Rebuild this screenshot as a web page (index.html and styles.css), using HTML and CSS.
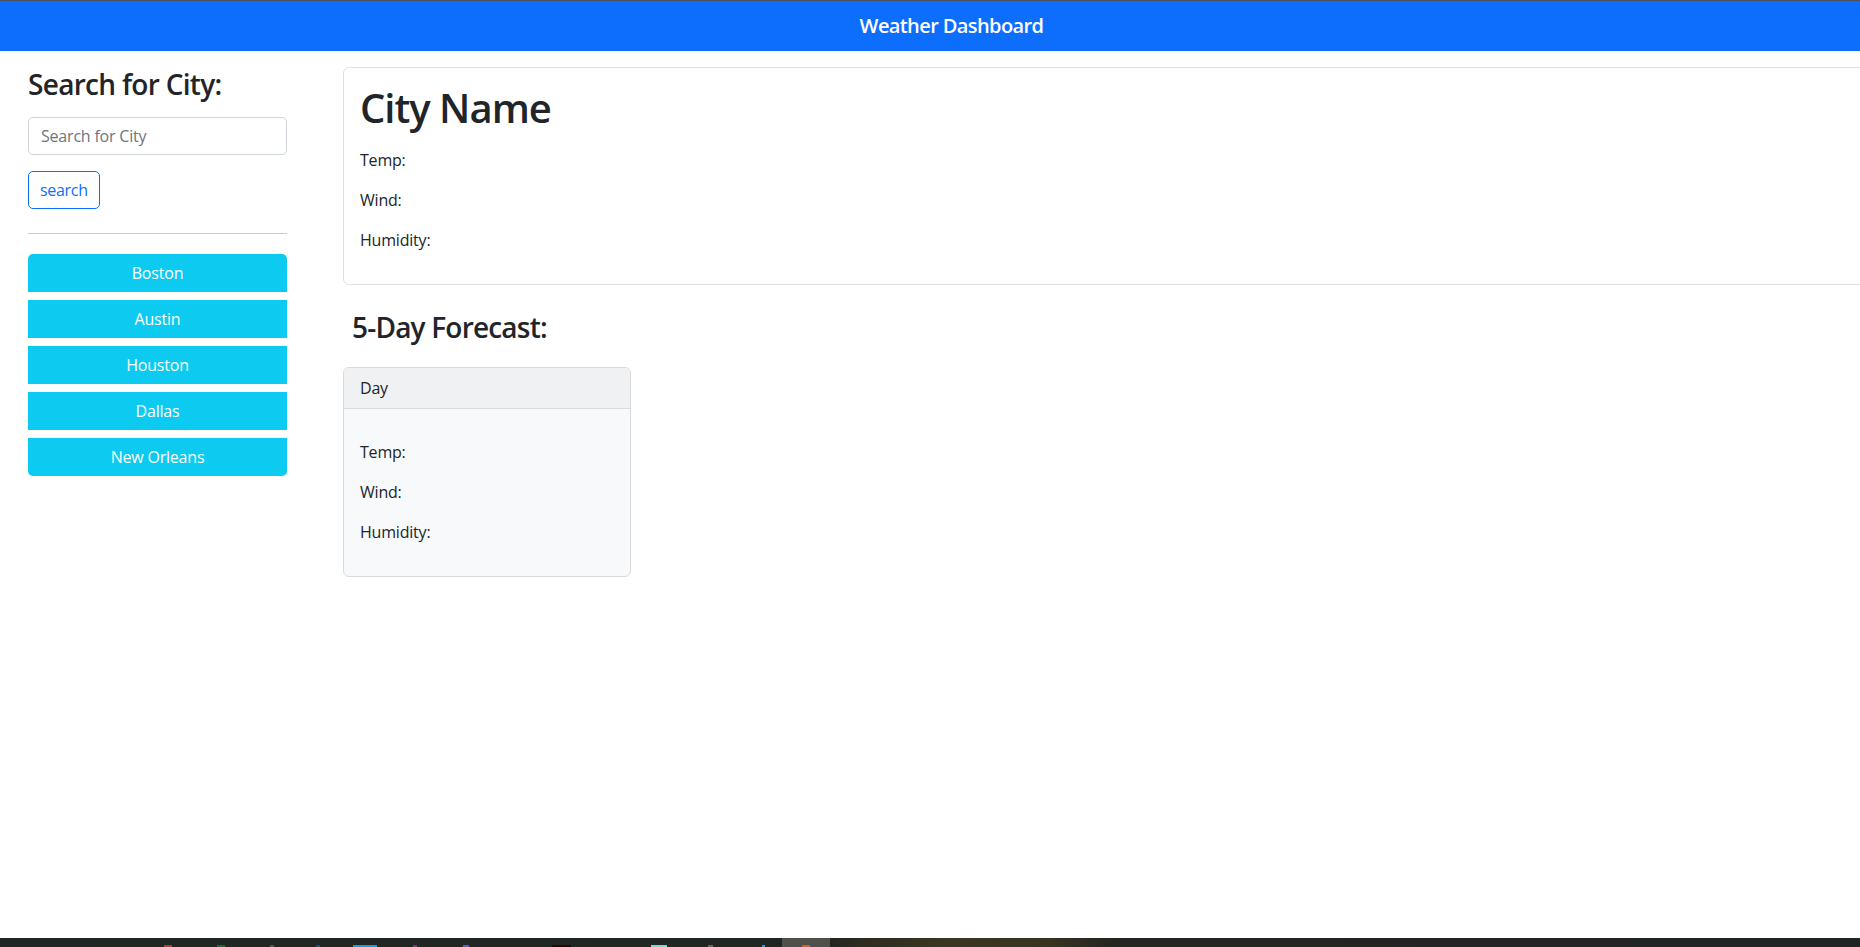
FILE: index.html
```html
<!DOCTYPE html>
<html lang="en">
<head>
<meta charset="utf-8">
<title>Weather Dashboard</title>
<link rel="stylesheet" href="styles.css">
</head>
<body>
<div class="page">
  <header class="navbar">
    <span class="brand">Weather Dashboard</span>
  </header>
  <div class="layout">
    <aside class="sidebar">
      <h3 class="side-title">Search for City:</h3>
      <input class="search-input" type="text" placeholder="Search for City">
      <button class="search-btn" type="button">search</button>
      <hr class="divider">
      <div class="history">
        <button class="city-btn" type="button">Boston</button>
        <button class="city-btn" type="button">Austin</button>
        <button class="city-btn" type="button">Houston</button>
        <button class="city-btn" type="button">Dallas</button>
        <button class="city-btn" type="button">New Orleans</button>
      </div>
    </aside>
    <main class="content">
      <section class="current-card">
        <h1 class="city-name">City Name</h1>
        <p class="stat">Temp:</p>
        <p class="stat">Wind:</p>
        <p class="stat">Humidity:</p>
      </section>
      <h3 class="forecast-title">5-Day Forecast:</h3>
      <div class="forecast-row">
        <div class="day-card">
          <div class="day-header">Day</div>
          <div class="day-body">
            <div class="day-icon"></div>
            <p class="stat">Temp:</p>
            <p class="stat">Wind:</p>
            <p class="stat">Humidity:</p>
          </div>
        </div>
      </div>
    </main>
  </div>
</div>
<div class="taskbar">
  <span class="tb-icon tb-red"></span>
  <span class="tb-icon tb-green"></span>
  <span class="tb-icon tb-gray"></span>
  <span class="tb-icon tb-navy"></span>
  <span class="tb-icon tb-cyan"></span>
  <span class="tb-icon tb-plum"></span>
  <span class="tb-icon tb-violet"></span>
  <span class="tb-icon tb-dark"></span>
  <span class="tb-icon tb-mint"></span>
  <span class="tb-icon tb-gray2"></span>
  <span class="tb-icon tb-blue"></span>
  <span class="tb-active"><span class="tb-icon tb-orange"></span></span>
</div>
</body>
</html>
```

FILE: styles.css
```css
html, body {
  margin: 0;
  padding: 0;
  height: 100%;
  overflow: hidden;
}

body {
  display: flex;
  flex-direction: column;
  font-family: "Open Sans", "Noto Sans", sans-serif;
  font-size: 16px;
  letter-spacing: -0.2px;
  color: #212529;
  background: #fff;
}

.page {
  width: 1903px;
  flex: 1;
}

.navbar {
  height: 50px;
  border-top: 1px solid #4b5056;
  background: #0d6efd;
  display: flex;
  justify-content: center;
  align-items: center;
}

.brand {
  color: #fff;
  font-size: 20px;
  font-weight: 600;
  letter-spacing: -0.6px;
  line-height: 50px;
}

.layout {
  display: flex;
  align-items: flex-start;
  padding: 16px 12px 0 28px;
}

.sidebar {
  width: 259px;
  flex-shrink: 0;
  display: flex;
  flex-direction: column;
  align-items: flex-start;
}

.side-title {
  margin: 0 0 16px;
  font-size: 28px;
  font-weight: 600;
  letter-spacing: -0.7px;
  line-height: 34px;
}

.search-input {
  box-sizing: border-box;
  width: 100%;
  height: 38px;
  margin: 0 0 16px;
  padding: 0 12px;
  border: 1px solid #ced4da;
  border-radius: 5px;
  font-family: inherit;
  font-size: 16px;
  letter-spacing: -0.2px;
  color: #212529;
  outline: none;
}

.search-input::placeholder {
  color: #6c757d;
}

.search-btn {
  box-sizing: border-box;
  height: 38px;
  padding: 0 11px;
  border: 1px solid #0d6efd;
  border-radius: 5px;
  background: #fff;
  color: #0d6efd;
  font-family: inherit;
  font-size: 16px;
  letter-spacing: -0.3px;
  line-height: 24px;
}

.divider {
  width: 100%;
  margin: 24px 0 20px;
  border: 0;
  border-top: 1px solid #c8c9ca;
}

.history {
  width: 100%;
  display: flex;
  flex-direction: column;
  gap: 8px;
}

.city-btn {
  box-sizing: border-box;
  height: 38px;
  width: 100%;
  border: 0;
  border-radius: 0;
  background: #0dcaf0;
  color: #fff;
  font-family: inherit;
  font-size: 16px;
  letter-spacing: -0.2px;
  line-height: 24px;
}

.city-btn:first-child {
  border-radius: 5px 5px 0 0;
}

.city-btn:last-child {
  border-radius: 0 0 5px 5px;
}

.content {
  flex: 1;
  margin-left: 56px;
}

.current-card {
  border: 1px solid #dfdfdf;
  border-radius: 6px;
  padding: 16px;
}

.city-name {
  margin: 0 0 16px;
  font-size: 40px;
  font-weight: 600;
  letter-spacing: -1px;
  line-height: 48px;
}

.stat {
  margin: 0 0 16px;
  font-size: 16px;
  line-height: 24px;
}

.forecast-title {
  margin: 25px 0 23px 9px;
  font-size: 28px;
  font-weight: 600;
  letter-spacing: -0.8px;
  line-height: 34px;
}

.forecast-row {
  display: flex;
  gap: 16px;
}

.day-card {
  width: 288px;
  box-sizing: border-box;
  border: 1px solid #d9dadb;
  border-radius: 6px;
  background: #f8f9fa;
  overflow: hidden;
}

.day-header {
  padding: 8px 16px;
  line-height: 24px;
  background: #f0f1f2;
  border-bottom: 1px solid #d9dadb;
}

.day-body {
  padding: 16px;
}

.day-icon {
  height: 15px;
}

.taskbar {
  height: 9px;
  flex-shrink: 0;
  display: flex;
  align-items: flex-end;
  background: linear-gradient(90deg, #212624 0, #222623 833px, #2c2c1f 860px, #3a3621 950px, #36331f 1050px, #232522 1115px, #202423 100%);
}

.tb-icon {
  height: 2px;
  display: block;
}

.tb-red { width: 8px; margin-left: 164px; background: #c0392b; }
.tb-green { width: 8px; margin-left: 45px; background: #1e6b3a; }
.tb-gray { width: 4px; margin-left: 45px; background: #555; }
.tb-navy { width: 4px; margin-left: 42px; background: #1d4f7a; }
.tb-cyan { width: 24px; margin-left: 33px; background: #0aa2e0; }
.tb-plum { width: 4px; margin-left: 36px; background: #7a3a5a; }
.tb-violet { width: 6px; margin-left: 46px; background: #5560d0; }
.tb-dark { width: 19px; margin-left: 83px; background: #1a0a0a; }
.tb-mint { width: 16px; margin-left: 80px; background: #6fe0c0; }
.tb-gray2 { width: 5px; margin-left: 41px; background: #666; }
.tb-blue { width: 3px; margin-left: 49px; background: #1aa0e0; }

.tb-active {
  width: 48px;
  height: 9px;
  margin-left: 17px;
  background: #4f504b;
  display: flex;
  align-items: flex-end;
  justify-content: center;
}

.tb-orange { width: 8px; background: #e05a20; }
```
